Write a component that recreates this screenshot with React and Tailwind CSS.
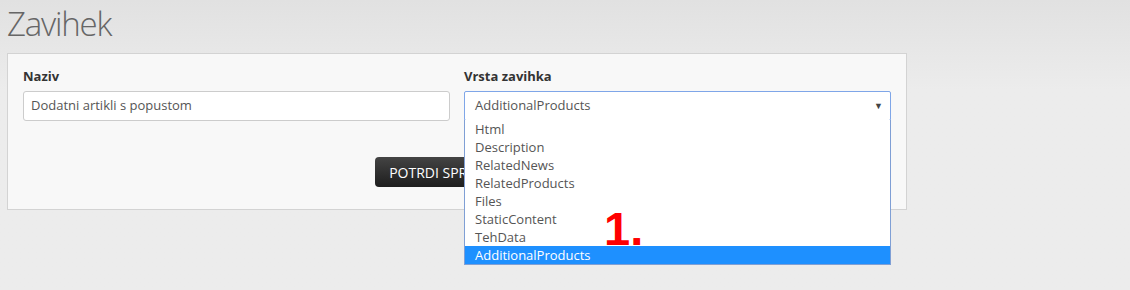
import { useState } from 'react';

const options = ['Html', 'Description', 'RelatedNews', 'RelatedProducts', 'Files', 'StaticContent', 'TehData', 'AdditionalProducts'];

export default function App() {
    const [value] = useState('AdditionalProducts');

    return (
        <div className="relative min-h-[290px] w-full bg-gradient-to-b from-[#e1e1e1] to-[#ececec] to-[90px] font-['Open_Sans',sans-serif] text-[#444]">
            <h1 className="pl-[7px] pt-[4px] text-[33px] leading-[40px] font-light text-[#666] tracking-[-1.2px]">Zavihek</h1>

            {/* Panel */}
            <div className="ml-[7px] mt-[9px] w-[900px] border border-[#d3d3d3] bg-[#f8f8f8] px-[15px] pt-[13px] pb-[22px]">
                <div className="flex gap-[14px]">
                    <div className="flex-1">
                        <label className="block text-[13px] font-bold leading-[18px] text-[#333]">Naziv</label>
                        <div className="mt-[6px] flex h-[30px] items-center rounded-[3px] border border-[#ccc] bg-white px-[7px] text-[13px] text-[#555]">
                            Dodatni artikli s popustom
                        </div>
                    </div>
                    <div className="relative flex-1">
                        <label className="block text-[13px] font-bold leading-[18px] text-[#333]">Vrsta zavihka</label>
                        <div className="mt-[6px] flex h-[30px] items-center justify-between rounded-[2px] border border-[#7fa6e8] bg-white pl-[10px] pr-[7px] text-[13px] text-[#555]">
                            <span>{value}</span>
                            <span className="text-[9px] text-[#444]">▼</span>
                        </div>
                        {/* Open dropdown */}
                        <div className="absolute left-0 right-0 top-[53px] z-10 border border-t-0 border-[#7f9fd5] bg-white">
                            {options.map(o => (
                                <div key={o} className={`h-[18px] pl-[10px] text-[13px] leading-[18px] ${o === value ? 'bg-[#1e90ff] text-white' : 'text-[#555]'}`}>{o}</div>
                            ))}
                        </div>
                    </div>
                </div>
                <div className="mt-[36px] flex justify-center">
                    <button className="h-[30px] w-[164px] rounded-[4px] bg-gradient-to-b from-[#444] to-[#1e1e1e] text-[14px] text-white">POTRDI SPREMEMBE</button>
                </div>
            </div>

            {/* Annotation */}
            <div className="absolute left-[604px] top-[205px] z-20 text-[47px] font-bold leading-none text-[#ff0000] font-['Liberation_Sans',sans-serif]">1.</div>
        </div>
    );
}
